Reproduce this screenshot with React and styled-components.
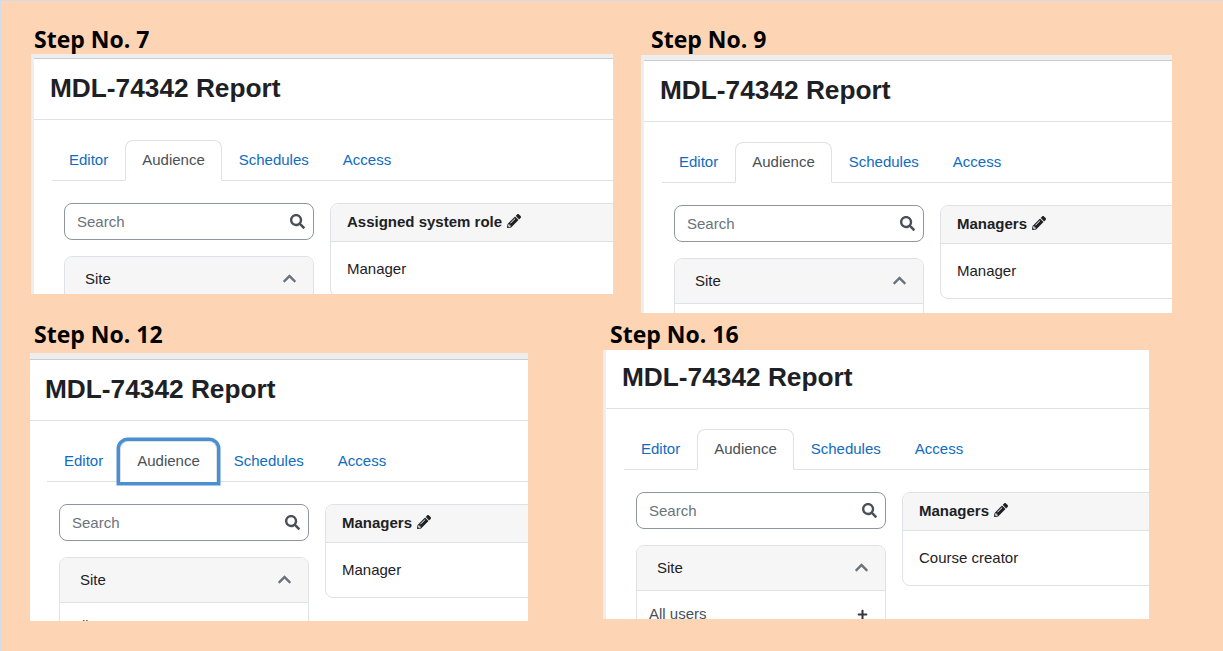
import styled, { createGlobalStyle } from "styled-components";
import { FaSearch, FaChevronUp, FaPencilAlt, FaPlus } from "react-icons/fa";

const GlobalStyle = createGlobalStyle`
  html, body {
    margin: 0;
    padding: 0;
    background: #fdd5b5;
  }
`;

const Page = styled.div`
  box-sizing: border-box;
  width: 1223px;
  height: 651px;
  padding-top: 24px;
  background: #fdd5b5;
  border-top: 1px solid #d3dbe8;
  border-left: 1px solid #d3dbe8;
  overflow: hidden;
  display: flex;
  flex-direction: column;
`;

const Row = styled.div`
  display: flex;
  align-items: flex-start;
  padding-left: ${(p) => p.$left}px;
  margin-top: ${(p) => p.$top || 0}px;
`;

const Step = styled.div`
  display: flex;
  flex-direction: column;
  margin-left: ${(p) => p.$left || 0}px;
`;

const StepLabel = styled.div`
  height: ${(p) => p.$height}px;
  padding-left: ${(p) => p.$indent}px;
  font-family: "Open Sans", sans-serif;
  font-weight: 700;
  font-size: 23px;
  line-height: 28px;
  color: #000;
`;

const Shot = styled.div`
  width: ${(p) => p.$w}px;
  height: ${(p) => p.$h}px;
  background: #eeeeee;
  overflow: hidden;
  display: flex;
  flex-direction: column;
  font-family: "Liberation Sans", sans-serif;
  font-size: 15px;
  color: #1d2125;
`;

const TopBand = styled.div`
  flex: none;
  height: ${(p) => p.$height}px;
  margin-left: ${(p) => p.$strip}px;
`;

const Pane = styled.div`
  flex: 1;
  min-height: 0;
  width: 760px;
  margin-left: ${(p) => p.$strip}px;
  background: #fff;
  border-top: ${(p) => (p.$line ? "1px solid #cccccc" : "none")};
`;

const Header = styled.div`
  box-sizing: border-box;
  height: ${(p) => p.$height + 1}px;
  display: flex;
  align-items: flex-end;
  padding: 0 0 11px 16px;
  border-bottom: 1px solid #dee2e6;
`;

const Title = styled.h2`
  margin: 0;
  font-size: 26.25px;
  line-height: 40px;
  font-weight: 700;
  color: #1d2125;
`;

const Body = styled.div`
  padding: 20px 0 0 18px;
`;

const Tabs = styled.div`
  display: flex;
  height: 40px;
  border-bottom: 1px solid #dee2e6;
`;

const Tab = styled.div`
  box-sizing: border-box;
  height: 41px;
  padding: 0 16px 2px;
  display: flex;
  align-items: center;
  border: 1px solid ${(p) => (p.$active ? "#dee2e6" : "transparent")};
  border-bottom-color: ${(p) => (p.$active ? "#fff" : "transparent")};
  border-radius: 8px 8px 0 0;
  background: ${(p) => (p.$active ? "#fff" : "transparent")};
  color: ${(p) => (p.$active ? "#495057" : "#0f6cbf")};
  position: relative;
  box-shadow: ${(p) => (p.$focused ? "0 0 0 3.5px #4a90d0" : "none")};
`;

const Columns = styled.div`
  display: flex;
  align-items: flex-start;
  gap: 16px;
  padding: 22px 0 0 12px;
`;

const Sidebar = styled.div`
  flex: none;
  width: 250px;
  display: flex;
  flex-direction: column;
  gap: 16px;
`;

const SearchBox = styled.div`
  box-sizing: border-box;
  height: 37px;
  display: flex;
  align-items: center;
  justify-content: space-between;
  padding: 0 8px 0 12px;
  border: 1px solid #8f959e;
  border-radius: 8px;
  color: #6a737b;
`;

const SearchIcon = styled(FaSearch)`
  width: 15px;
  height: 15px;
  color: #495057;
`;

const SiteCard = styled.div`
  border: 1px solid #dee2e6;
  border-radius: 8px;
  overflow: hidden;
`;

const SiteHeader = styled.div`
  box-sizing: border-box;
  height: 45px;
  display: flex;
  align-items: center;
  justify-content: space-between;
  padding: 0 16px 1px 20px;
  background: #f6f6f6;
  border-bottom: 1px solid #dee2e6;
`;

const Chevron = styled(FaChevronUp)`
  width: 15px;
  height: 15px;
  color: #6a737b;
`;

const SiteRow = styled.div`
  display: flex;
  align-items: center;
  justify-content: space-between;
  height: 44px;
  padding: 0 17px 0 12px;
  color: #495057;
`;

const PlusIcon = styled(FaPlus)`
  width: 11px;
  height: 11px;
  margin-top: 2px;
  color: #343a40;
`;

const RoleCard = styled.div`
  flex: none;
  width: 420px;
  border: 1px solid #dee2e6;
  border-radius: 8px;
  overflow: hidden;
`;

const RoleHeader = styled.div`
  box-sizing: border-box;
  height: 38px;
  display: flex;
  align-items: center;
  gap: 5px;
  padding: 0 16px 3px;
  background: #f6f6f6;
  border-bottom: 1px solid #dee2e6;
  font-weight: 700;
`;

const Pencil = styled(FaPencilAlt)`
  width: 14px;
  height: 14px;
  color: #1d2125;
`;

const RoleBody = styled.div`
  box-sizing: border-box;
  height: 54px;
  display: flex;
  align-items: center;
  padding: 0 16px 2px;
`;

const ReportShot = ({ w, h, band, strip, line, headH = 60, focused, listed, role, value }) => (
  <Shot $w={w} $h={h}>
    {band > 0 && <TopBand $height={band} $strip={strip} />}
    <Pane $strip={strip} $line={line}>
      <Header $height={headH}>
        <Title>MDL-74342 Report</Title>
      </Header>
      <Body>
        <Tabs>
          <Tab>Editor</Tab>
          <Tab $active $focused={focused}>Audience</Tab>
          <Tab>Schedules</Tab>
          <Tab>Access</Tab>
        </Tabs>
        <Columns>
          <Sidebar>
            <SearchBox>
              <span>Search</span>
              <SearchIcon />
            </SearchBox>
            <SiteCard>
              <SiteHeader>
                <span>Site</span>
                <Chevron />
              </SiteHeader>
              <SiteRow>
                {listed && <span>All users</span>}
                {listed && <PlusIcon />}
              </SiteRow>
            </SiteCard>
          </Sidebar>
          <RoleCard>
            <RoleHeader>
              <span>{role}</span>
              <Pencil />
            </RoleHeader>
            <RoleBody>{value}</RoleBody>
          </RoleCard>
        </Columns>
      </Body>
    </Pane>
  </Shot>
);

export default function App() {
  return (
    <>
      <GlobalStyle />
      <Page>
        <Row $left={30}>
          <Step>
            <StepLabel $height={29} $indent={3}>Step No. 7</StepLabel>
            <ReportShot w={582} h={240} band={4} strip={3} line role="Assigned system role" value="Manager" />
          </Step>
          <Step $left={28}>
            <StepLabel $height={30} $indent={10}>Step No. 9</StepLabel>
            <ReportShot w={531} h={258} band={5} strip={3} line role="Managers" value="Manager" />
          </Step>
        </Row>
        <Row $left={29} $top={7}>
          <Step>
            <StepLabel $height={33} $indent={4}>Step No. 12</StepLabel>
            <ReportShot w={498} h={268} band={6} strip={-1} line focused listed role="Managers" value="Manager" />
          </Step>
          <Step $left={75}>
            <StepLabel $height={30} $indent={7}>Step No. 16</StepLabel>
            <ReportShot w={546} h={269} band={0} strip={3} headH={58} listed role="Managers" value="Course creator" />
          </Step>
        </Row>
      </Page>
    </>
  );
}
